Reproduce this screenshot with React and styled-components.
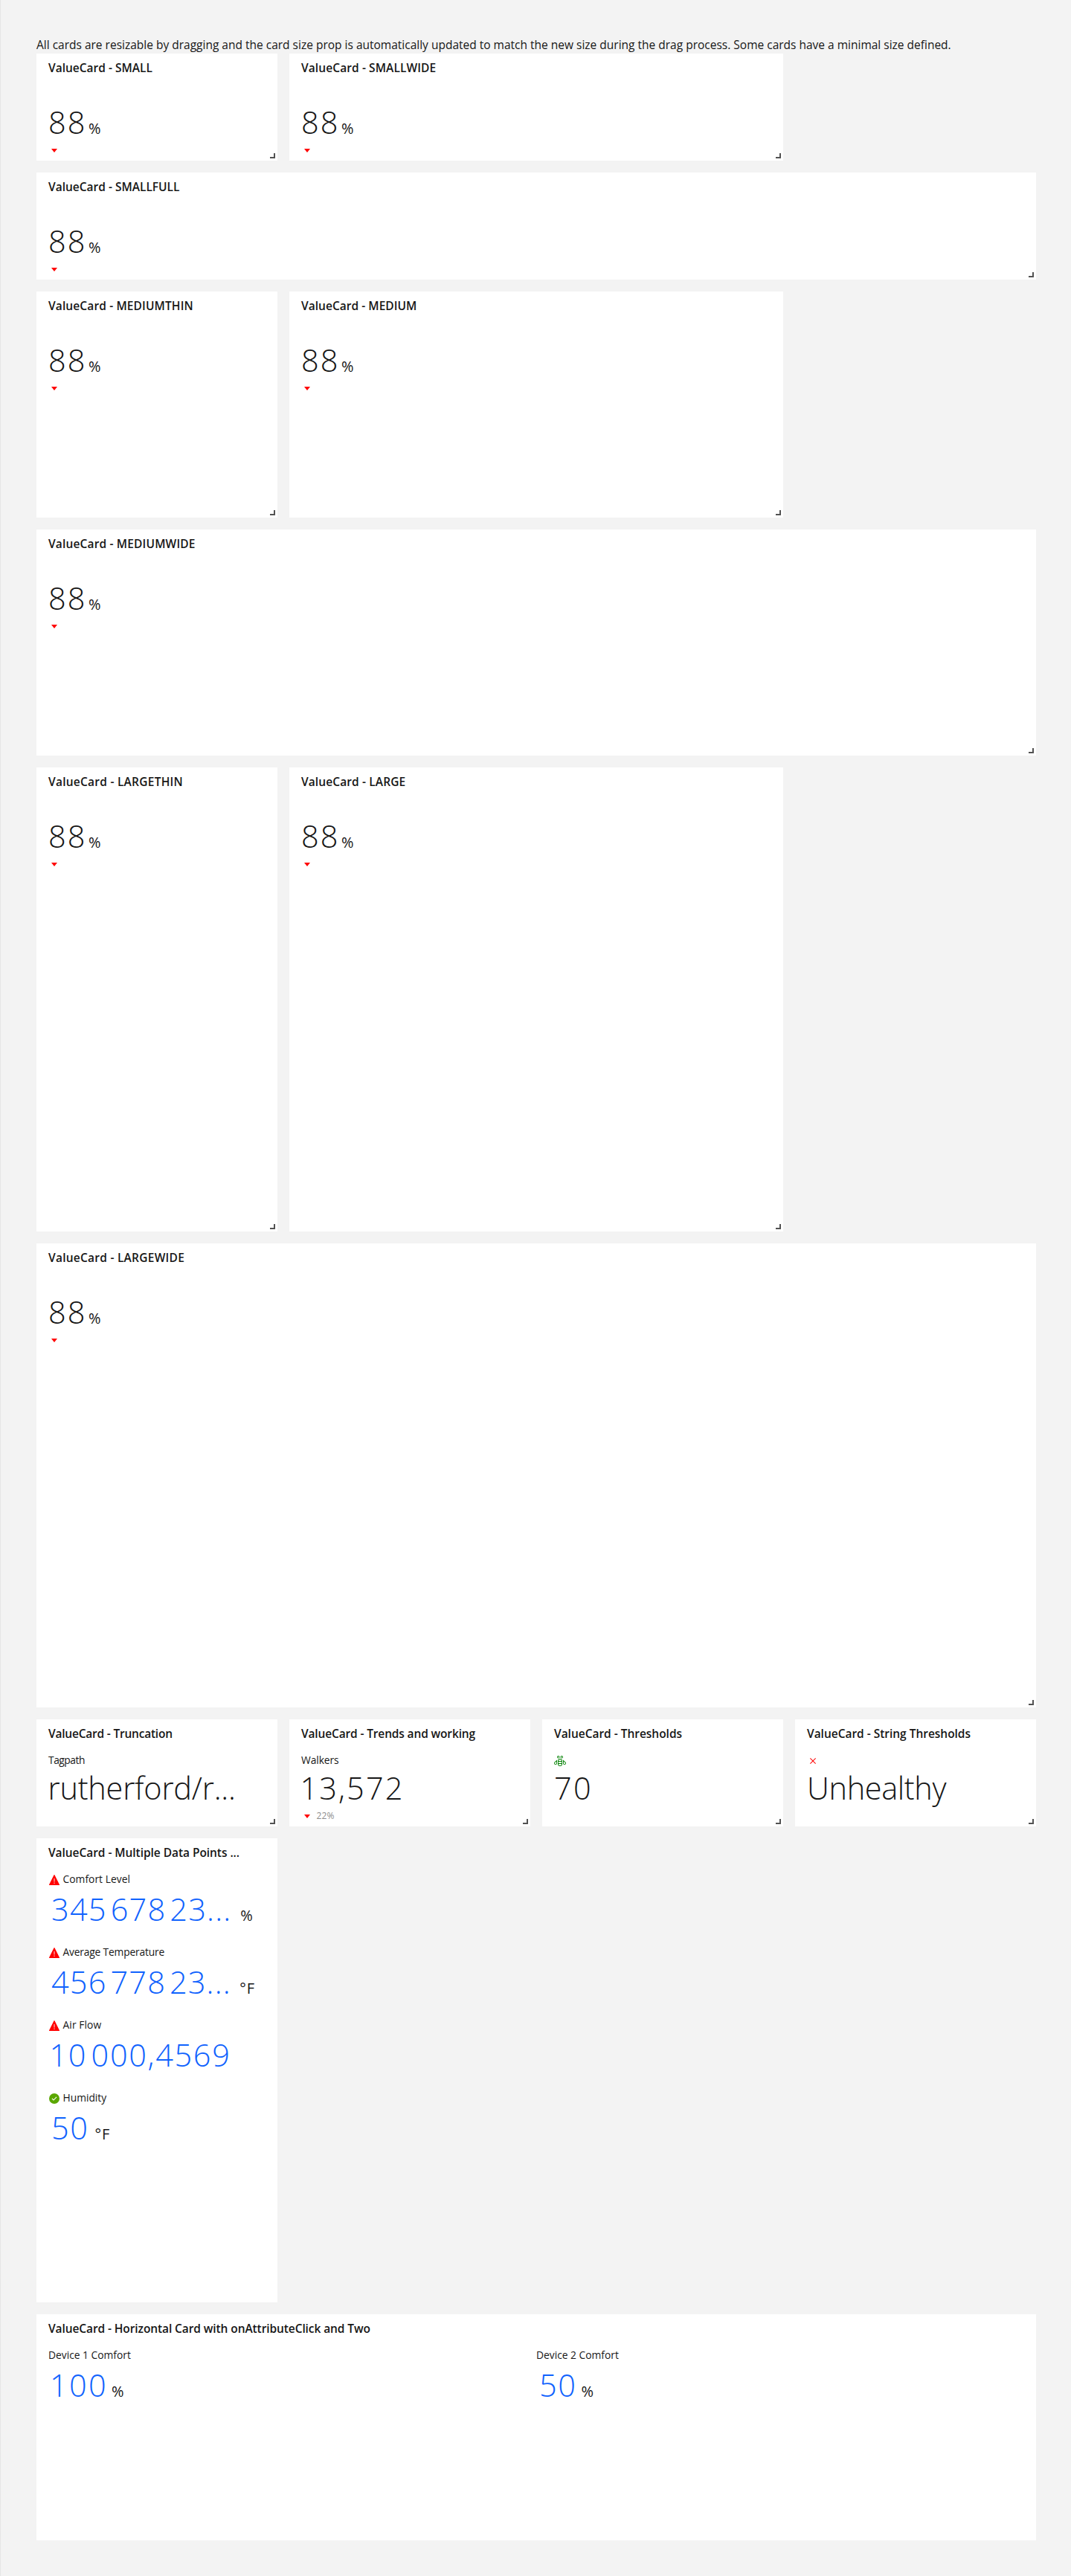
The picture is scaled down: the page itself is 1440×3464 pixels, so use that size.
import React from 'react';
import styled, { createGlobalStyle } from 'styled-components';

const GlobalStyle = createGlobalStyle`
  *, *::before, *::after { box-sizing: border-box; }
  body {
    margin: 0;
    background: #f3f3f3;
    color: #161616;
    font-family: "Open Sans", "Noto Sans", sans-serif;
  }
`;

const Page = styled.main`
  min-height: 3464px;
  padding: 48px 47px 48px 48px;
  border-left: 1px solid #e6e6e6;
`;

const Intro = styled.p`
  margin: 0;
  font-size: 15.5px;
  line-height: 24px;
  white-space: nowrap;
`;

const Dashboard = styled.section`
  display: grid;
  grid-template-columns: repeat(4, 324px);
  grid-auto-rows: 144px;
  gap: 16px;
`;

const CardFrame = styled.article`
  position: relative;
  grid-column: span ${(p) => p.$cols};
  grid-row: span ${(p) => p.$rows};
  padding: 0 16px;
  background: #ffffff;
  overflow: hidden;
`;

const CardTitle = styled.h2`
  margin: 0 0 10px;
  font-size: 15.5px;
  font-weight: 600;
  line-height: 38px;
  letter-spacing: ${(p) => p.$track}px;
  white-space: nowrap;
`;

const ResizeHandle = styled.span`
  position: absolute;
  right: 3px;
  bottom: 3px;
  width: 7px;
  height: 7px;
  border-right: 2px solid #525252;
  border-bottom: 2px solid #525252;
  cursor: se-resize;
`;

const Attributes = styled.div`
  display: grid;
  grid-template-columns: repeat(${(p) => p.$columns}, 1fr);
  row-gap: 23px;
`;

const Attribute = styled.div`
  min-width: 0;
`;

const LabelRow = styled.div`
  display: flex;
  align-items: flex-start;
  gap: 3.5px;
  height: 16px;
`;

const Label = styled.span`
  font-size: 13.8px;
  line-height: 13px;
  letter-spacing: ${(p) => p.$track}px;
  white-space: nowrap;
`;

const ValueRow = styled.div`
  display: flex;
  align-items: baseline;
  height: ${(p) => (p.$link ? 59 : 56)}px;
  padding-top: ${(p) => (p.$link ? 3 : 0)}px;
  padding-left: ${(p) => (p.$link ? 4 : 0)}px;
`;

const Value = styled.span`
  margin-left: ${(p) => p.$shift}px;
  color: ${(p) => (p.$link ? '#0f62fe' : '#161616')};
  font-size: 41.5px;
  font-weight: 300;
  line-height: 56px;
  letter-spacing: ${(p) => p.$track}px;
  word-spacing: ${(p) => (p.$link ? -7 : 0)}px;
  white-space: nowrap;
`;

const Unit = styled.span`
  margin-left: ${(p) => p.$gap}px;
  font-size: 20px;
  line-height: 24px;
  letter-spacing: 1px;
`;

const TrendRow = styled.div`
  display: flex;
  gap: 4.5px;
  height: 16px;
  margin-top: 2px;
`;

const TrendText = styled.span`
  color: #8d8d8d;
  font-size: 12px;
  line-height: 15px;
  letter-spacing: 0.1px;
`;

const Glyph = styled.svg.attrs({ viewBox: '0 0 32 32', 'aria-hidden': true })`
  display: block;
  flex: none;
  width: 16px;
  height: 16px;
  fill: ${(p) => p.$color};
`;

const CaretDown = () => (
  <Glyph $color="#ff0000">
    <path d="M24 12 16 22 8 12z" />
  </Glyph>
);

const Warning = () => (
  <Glyph $color="#ff0000">
    <path d="M14.9 12h2.2v9h-2.2zM16 23a1.5 1.5 0 1 1 0 3 1.5 1.5 0 0 1 0-3z" fill="#ffa3a3" />
    <path d="M29.9 28.6l-13-26a1 1 0 0 0-1.8 0l-13 26A.9.9 0 0 0 2.1 29.5 1 1 0 0 0 3 30H29a1 1 0 0 0 .9-.5.9.9 0 0 0 0-.9ZM14.9 12h2.2v9H14.9ZM16 26a1.5 1.5 0 1 1 1.5-1.5A1.5 1.5 0 0 1 16 26Z" />
  </Glyph>
);

const Checkmark = () => (
  <Glyph $color="#5aa700">
    <path d="M16 2a14 14 0 1 0 14 14A14 14 0 0 0 16 2Zm-2 19.59-5-5L10.59 15 14 18.41 21.41 11l1.596 1.586Z" />
  </Glyph>
);

const Cross = () => (
  <Glyph $color="#ff0000">
    <path d="M24 9.4 22.6 8 16 14.6 9.4 8 8 9.4 14.6 16 8 22.6 9.4 24 16 17.4 22.6 24 24 22.6 17.4 16z" />
  </Glyph>
);

const Bee = () => (
  <Glyph $color="#008000">
    <path d="M16 10a6 6 0 0 0-6 6v8a6 6 0 0 0 12 0V16A6 6 0 0 0 16 10Zm-4.25 7.87h8.5v4.25h-8.5ZM16 28.25A4.27 4.27 0 0 1 11.75 24v-.13h8.5V24A4.27 4.27 0 0 1 16 28.25Zm4.25-12.12h-8.5V16a4.25 4.25 0 0 1 8.5 0Z" />
    <path d="M30.66 19.21 24 13v9.1a4 4 0 0 0 8 0A3.83 3.83 0 0 0 30.66 19.21ZM28 24.35a2.25 2.25 0 0 1-2.25-2.25V17l3.72 3.47A2.05 2.05 0 0 1 30.2 22 2.25 2.25 0 0 1 28 24.35Z" />
    <path d="M0 22.1a4 4 0 0 0 8 0V13L1.34 19.21A3.88 3.88 0 0 0 0 22.1Zm2.48-1.56L6.25 17v5.1a2.25 2.25 0 0 1-4.5 0A2.05 2.05 0 0 1 2.48 20.54Z" />
    <path d="M15 5.5A3.5 3.5 0 1 0 11.5 9 3.5 3.5 0 0 0 15 5.5Zm-5.25 0A1.75 1.75 0 1 1 11.5 7.25 1.77 1.77 0 0 1 9.75 5.5Z" />
    <path d="M20.5 2A3.5 3.5 0 1 0 24 5.5 3.5 3.5 0 0 0 20.5 2Zm0 5.25A1.75 1.75 0 1 1 22.25 5.5 1.77 1.77 0 0 1 20.5 7.25Z" />
  </Glyph>
);

const icons = { warning: Warning, check: Checkmark, cross: Cross, bee: Bee };

const percentage = [{ value: '88', track: 2, unit: '%', unitGap: 2.5, trend: '' }];

const cards = [
  { title: 'SMALL', cols: 1, rows: 1, attributes: percentage },
  { title: 'SMALLWIDE', titleTrack: 0.096, cols: 2, rows: 1, attributes: percentage },
  { title: 'SMALLFULL', cols: 4, rows: 1, attributes: percentage },
  { title: 'MEDIUMTHIN', titleTrack: 0.124, cols: 1, rows: 2, attributes: percentage },
  { title: 'MEDIUM', titleTrack: 0.031, cols: 2, rows: 2, attributes: percentage },
  { title: 'MEDIUMWIDE', titleTrack: 0.157, cols: 4, rows: 2, attributes: percentage },
  { title: 'LARGETHIN', titleTrack: 0.248, cols: 1, rows: 4, attributes: percentage },
  { title: 'LARGE', titleTrack: 0.109, cols: 2, rows: 4, attributes: percentage },
  { title: 'LARGEWIDE', titleTrack: 0.25, cols: 4, rows: 4, attributes: percentage },
  {
    title: 'Truncation', titleTrack: -0.213, cols: 1, rows: 1,
    attributes: [{ label: 'Tagpath', labelTrack: -0.464, value: 'rutherford/r...', track: -0.228, shift: -0.5 }],
  },
  {
    title: 'Trends and working', titleTrack: -0.146, cols: 1, rows: 1,
    attributes: [{ label: 'Walkers', labelTrack: -0.087, value: '13,572', track: 2.1, shift: -1.5, trend: '22%' }],
  },
  {
    title: 'Thresholds', titleTrack: -0.023, cols: 1, rows: 1,
    attributes: [{ icon: 'bee', value: '70', track: 2.3 }],
  },
  {
    title: 'String Thresholds', titleTrack: -0.022, cols: 1, rows: 1,
    attributes: [{ icon: 'cross', value: 'Unhealthy', track: -0.361 }],
  },
  {
    title: 'Multiple Data Points ...', titleTrack: -0.052, cols: 1, rows: 4, fixed: true,
    attributes: [
      { icon: 'warning', label: 'Comfort Level', labelTrack: 0.047, value: '345 678 23...', track: 1.2, unit: '%', unitGap: 12, link: true },
      { icon: 'warning', label: 'Average Temperature', labelTrack: -0.173, value: '456 778 23...', track: 1.155, unit: '°F', unitGap: 11.5, link: true },
      { icon: 'warning', label: 'Air Flow', labelTrack: 0.095, value: '10 000,4569', track: 1.65, shift: -2.5, link: true },
      { icon: 'check', label: 'Humidity', value: '50', track: 1.5, unit: '°F', unitGap: 8, link: true },
    ],
  },
  {
    title: 'Horizontal Card with onAttributeClick and Two', titleTrack: -0.094, cols: 4, rows: 2, fixed: true, columns: 2,
    attributes: [
      { label: 'Device 1 Comfort', value: '100', track: 2.3, shift: -2, unit: '%', unitGap: 5, link: true },
      { label: 'Device 2 Comfort', value: '50', track: 1.5, unit: '%', unitGap: 6, link: true },
    ],
  },
];

function DataPoint({ icon, label, labelTrack = 0, value, track = 0, shift = 0, unit, unitGap, link, trend }) {
  const Icon = icons[icon];
  return (
    <Attribute>
      <LabelRow>
        {Icon && <Icon />}
        {label && <Label $track={labelTrack}>{label}</Label>}
      </LabelRow>
      <ValueRow $link={link}>
        <Value $link={link} $track={track} $shift={shift}>{value}</Value>
        {unit && <Unit $gap={unitGap}>{unit}</Unit>}
      </ValueRow>
      {trend !== undefined && (
        <TrendRow>
          <CaretDown />
          {trend && <TrendText>{trend}</TrendText>}
        </TrendRow>
      )}
    </Attribute>
  );
}

function ValueCard({ title, titleTrack = 0, cols, rows, attributes, columns = 1, fixed }) {
  return (
    <CardFrame $cols={cols} $rows={rows}>
      <CardTitle $track={titleTrack}>{`ValueCard - ${title}`}</CardTitle>
      <Attributes $columns={columns}>
        {attributes.map((attribute, i) => (
          <DataPoint key={i} {...attribute} />
        ))}
      </Attributes>
      {!fixed && <ResizeHandle />}
    </CardFrame>
  );
}

export default function App() {
  return (
    <>
      <GlobalStyle />
      <Page>
        <Intro>
          All cards are resizable by dragging and the card size prop is automatically updated to match
          the new size during the drag process. Some cards have a minimal size defined.
        </Intro>
        <Dashboard>
          {cards.map((card) => (
            <ValueCard key={card.title} {...card} />
          ))}
        </Dashboard>
      </Page>
    </>
  );
}
